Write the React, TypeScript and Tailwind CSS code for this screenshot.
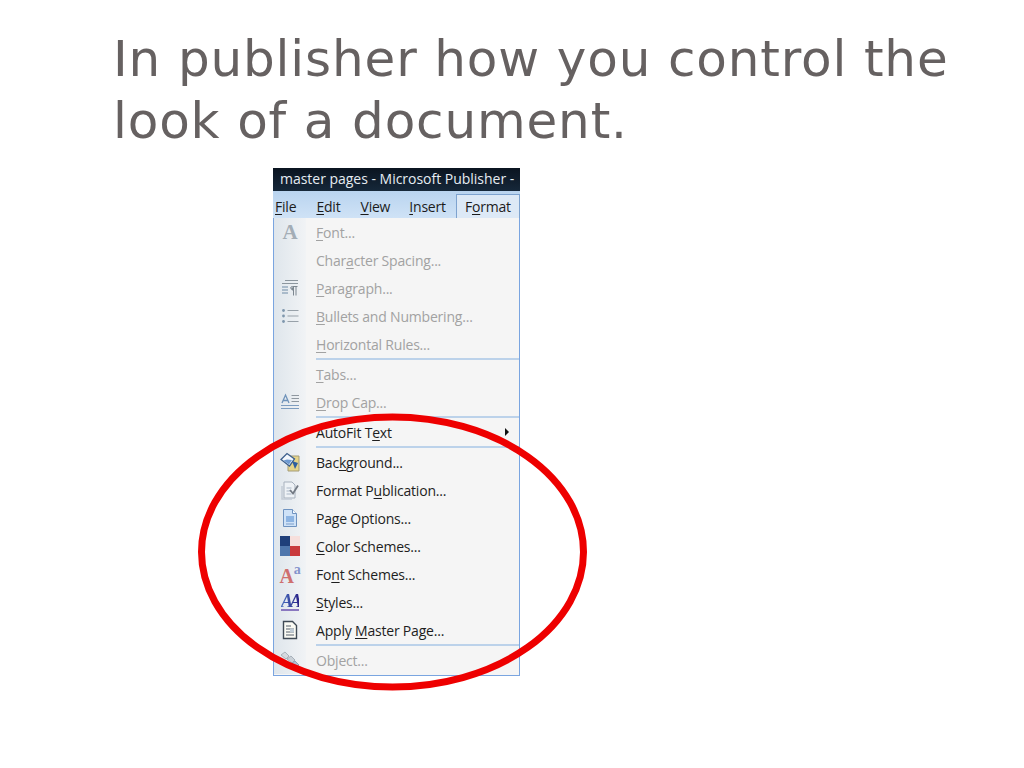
import type { ReactNode } from 'react';

interface MenuItem {
  label: string;
  // index of the underlined letter
  u: number;
  disabled?: boolean;
  arrow?: boolean;
  icon?: ReactNode;
  sepAfter?: boolean;
}

const FontIcon = () => (
  <span className="font-['Liberation_Serif',serif] text-[21px] leading-none font-bold text-[#a3adb6]">A</span>
);

const ParagraphIcon = () => (
  <svg width="18" height="18" viewBox="0 0 18 18" fill="none">
    <path d="M4 1.500h13M1 4.500h16" stroke="#8c969e" strokeWidth="1" />
    <path d="M1 8h6M1 11h6M1 14h6" stroke="#6f8ba6" strokeWidth="1" />
    <path d="M9.500 9.500a2 2 0 0 1 2-2h5M12.500 7.500v9M15 7.500v9" stroke="#7d8790" strokeWidth="1" />
    <path d="M12 8v3.500h-.500a2 2 0 0 1-1.500-2z" fill="#7d8790" />
  </svg>
);

const BulletsIcon = () => (
  <svg width="18" height="18" viewBox="0 0 18 18" fill="none">
    <path d="M6.500 3.500h11M6.500 9h11M6.500 14.500h11" stroke="#98a1a9" strokeWidth="1" />
    <circle cx="2.500" cy="3.500" r="1.400" fill="#7f97ad" />
    <circle cx="2.500" cy="9" r="1.400" fill="#7f97ad" />
    <circle cx="2.500" cy="14.500" r="1.400" fill="#7f97ad" />
  </svg>
);

const DropCapIcon = () => (
  <svg width="18" height="18" viewBox="0 0 18 18" fill="none">
    <path d="M1 10 4.500 2 8 10M2.400 7.500h4.200" stroke="#6f93ba" strokeWidth="1.300" />
    <path d="M10.500 2.500H18M10.500 5.500H18M10.500 8.500H18" stroke="#8f98a0" strokeWidth="1" />
    <path d="M0 12.500h18M0 15.500h18" stroke="#7d9dc0" strokeWidth="1" />
  </svg>
);

const BackgroundIcon = () => (
  <svg width="20" height="20" viewBox="0 0 20 20" fill="none">
    <path d="M8 4h11v15H8z" fill="#e6d488" stroke="#a39c78" strokeWidth="1" />
    <path d="M1 7.500 7 1.500l7.500 5.500-5 7z" fill="#f2f7fc" stroke="#3c5f8c" strokeWidth="1.300" />
    <path d="M3.500 8.500l3.500-1 5 .5-3 4.500z" fill="#6d9ad2" />
    <path d="M12 9l6 2-3 6-1.500-4z" fill="#2f5f9f" />
  </svg>
);

const FormatPubIcon = () => (
  <svg width="20" height="20" viewBox="0 0 20 20" fill="none">
    <path d="M4 2h8l3 3v13H4z" fill="#eef2f6" stroke="#a7b1bd" strokeWidth="1" />
    <path d="M2 6v13h10" stroke="#c3ccd6" strokeWidth="1.500" />
    <path d="M6.500 8h5M6.500 11h5M6.500 14h5" stroke="#a9b6c6" strokeWidth="1" />
    <path d="M10 10l3 3.500 5-8" stroke="#737a84" strokeWidth="1.800" />
  </svg>
);

const PageOptionsIcon = () => (
  <svg width="18" height="20" viewBox="0 0 18 20" fill="none">
    <path d="M2.500 1.500h9l4 4v13h-13z" fill="#cfe2f7" stroke="#6f93c0" strokeWidth="1" />
    <path d="M11.500 1.500v4h4" fill="#f5faff" stroke="#6f93c0" strokeWidth="1" />
    <path d="M5 8h8v6H5z" fill="#8db4e2" />
    <path d="M5 16h8" stroke="#7c9fcb" strokeWidth="1" />
  </svg>
);

const ColorSchemesIcon = () => (
  <div className="grid h-[20px] w-[20px] grid-cols-2 grid-rows-2">
    <div className="bg-[#1f3f7a]" />
    <div className="bg-[#f6dfdc]" />
    <div className="bg-[#4f76ac]" />
    <div className="bg-[#c93a3c]" />
  </div>
);

const FontSchemesIcon = () => (
  <span className="flex items-start font-['Liberation_Serif',serif] leading-none font-bold">
    <span className="mt-[3px] text-[20px] text-[#cf6f6e]">A</span>
    <span className="text-[14px] text-[#8493cc]">a</span>
  </span>
);

const StylesIcon = () => (
  <span className="border-b-2 border-[#8a78c0] bg-gradient-to-r from-[#4a70c0] to-[#2a2288] bg-clip-text font-['Liberation_Serif',serif] text-[18px] leading-[16px] font-bold tracking-[-3px] text-transparent italic">
    AA
  </span>
);

const MasterPageIcon = () => (
  <svg width="18" height="20" viewBox="0 0 18 20" fill="none">
    <path d="M2.500 1.500h9l4 4v13h-13z" fill="#fbfbf4" stroke="#3f4a55" strokeWidth="1.400" />
    <path d="M5 6h5M5 9h8M5 12h8M5 15h8" stroke="#56616c" strokeWidth="1" />
    <path d="M9 8.500h4v4H9z" fill="#c0ccd6" />
  </svg>
);

const ObjectIcon = () => (
  <svg width="20" height="18" viewBox="0 0 20 18" fill="none">
    <path d="M1 4l4-3 4 4-3 3z" fill="#d4d9de" stroke="#aab2ba" strokeWidth="1" />
    <path d="M7 8l4-3 4 4-3 3z" fill="#c9d0d7" stroke="#a7b0b9" strokeWidth="1" />
    <path d="M12 12l3-2 4 4-3 3z" fill="#b0c0d4" stroke="#93a4b8" strokeWidth="1" />
  </svg>
);

const items: MenuItem[] = [
  { label: 'Font...', u: 0, disabled: true, icon: <FontIcon /> },
  { label: 'Character Spacing...', u: 4, disabled: true },
  { label: 'Paragraph...', u: 0, disabled: true, icon: <ParagraphIcon /> },
  { label: 'Bullets and Numbering...', u: 0, disabled: true, icon: <BulletsIcon /> },
  { label: 'Horizontal Rules...', u: 0, disabled: true, sepAfter: true },
  { label: 'Tabs...', u: 0, disabled: true },
  { label: 'Drop Cap...', u: 0, disabled: true, icon: <DropCapIcon />, sepAfter: true },
  { label: 'AutoFit Text', u: 9, arrow: true, sepAfter: true },
  { label: 'Background...', u: 3, icon: <BackgroundIcon /> },
  { label: 'Format Publication...', u: 8, icon: <FormatPubIcon /> },
  { label: 'Page Options...', u: 2, icon: <PageOptionsIcon /> },
  { label: 'Color Schemes...', u: 0, icon: <ColorSchemesIcon /> },
  { label: 'Font Schemes...', u: 2, icon: <FontSchemesIcon /> },
  { label: 'Styles...', u: 0, icon: <StylesIcon /> },
  { label: 'Apply Master Page...', u: 6, icon: <MasterPageIcon />, sepAfter: true },
  { label: 'Object...', u: 2, disabled: true, icon: <ObjectIcon /> },
];

const Underlined = ({ text, u }: { text: string; u: number }) => (
  <>
    {text.slice(0, u)}
    <span className="underline underline-offset-2">{text[u]}</span>
    {text.slice(u + 1)}
  </>
);

const MenuRow = ({ item }: { item: MenuItem }) => (
  <>
    <div className="flex h-[28px] items-center">
      <div className="flex h-full w-[32px] shrink-0 items-center justify-center bg-gradient-to-r from-[#dfe6ec] to-[#f1f3f5]">
        {item.icon}
      </div>
      <div className={`flex flex-1 items-center justify-between pr-[10px] pl-[10px] ${item.disabled ? 'text-[#a2a2a2]' : 'text-[#1e1e1e]'}`}>
        <span><Underlined text={item.label} u={item.u} /></span>
        {item.arrow && <span className="h-0 w-0 border-y-[4px] border-l-[4px] border-y-transparent border-l-[#111]" />}
      </div>
    </div>
    {item.sepAfter && (
      <div className="flex h-[2px]">
        <div className="w-[32px] shrink-0 bg-gradient-to-r from-[#dfe6ec] to-[#f1f3f5]" />
        <div className="ml-[10px] flex-1 bg-[#bcd2ea]" />
      </div>
    )}
  </>
);

const menuBar = [
  { label: 'File', u: 0 },
  { label: 'Edit', u: 0 },
  { label: 'View', u: 0 },
  { label: 'Insert', u: 0 },
];

export default function App() {
  return (
    <div className="relative h-[768px] w-[1024px] overflow-hidden bg-white">
      <h1 className="pt-[28px] pl-[113px] font-['DejaVu_Sans',sans-serif] text-[50px] leading-[62px] font-normal tracking-[0.85px] text-[#666161]">
        In publisher how you control the
        <br />
        look of a document.
      </h1>

      <div className="mt-[16px] ml-[273px] w-[247px] font-['Open_Sans',sans-serif] text-[14px] tracking-[-0.2px]">
        <div className="flex h-[23px] items-center bg-gradient-to-b from-[#0a1420] to-[#16283a] pb-[2px] pl-[7px] font-medium tracking-[-0.02px] text-[#e6ecf2]">
          master pages - Microsoft Publisher -
        </div>
        <div className="flex h-[27px] items-center bg-gradient-to-b from-[#b9d4ef] to-[#cfe2f6] pt-[3px] text-[#1c1c1c]">
          {menuBar.map((m, i) => (
            <span key={m.label} className={['mr-[20px] ml-[2px]', 'mr-[20px]', 'mr-[19px]', 'mr-[10px]'][i]}>
              <Underlined text={m.label} u={m.u} />
            </span>
          ))}
          <span className="ml-auto flex h-[24px] w-[65px] items-center justify-center self-end border-x border-t border-[#7ea3cf] bg-[#dde9f6]">
            <Underlined text="Format" u={1} />
          </span>
        </div>
        <div className="border-x border-b border-[#7aa5e0] bg-[#f5f5f5] pb-px">
          {items.map((item) => (
            <MenuRow key={item.label} item={item} />
          ))}
        </div>
      </div>

      {/* hand drawn circle over the menu */}
      <svg className="absolute top-[410px] left-[195px]" width="396" height="284" viewBox="0 0 396 284" fill="none">
        <ellipse cx="197.500" cy="142" rx="191" ry="135" stroke="#ee0000" strokeWidth="7" />
      </svg>
    </div>
  );
}
